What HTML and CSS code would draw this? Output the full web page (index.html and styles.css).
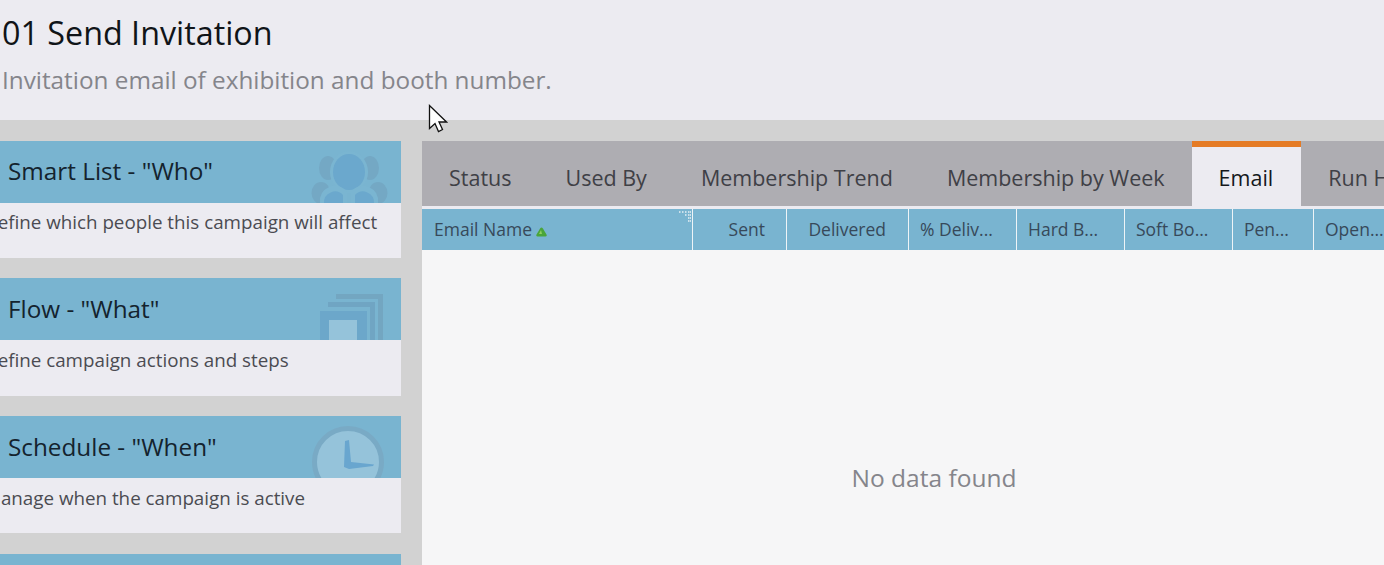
FILE: index.html
```html
<!DOCTYPE html>
<html lang="en">
<head>
<meta charset="utf-8">
<title>01 Send Invitation</title>
<link rel="stylesheet" href="styles.css">
</head>
<body>
<header class="page-head">
  <h1 class="page-title">01 Send Invitation</h1>
  <p class="page-sub">Invitation email of exhibition and booth number.</p>
</header>
<main class="workspace">
  <section class="cards">
    <article class="card">
      <div class="card-head">
        <h2 class="card-title">Smart List - "Who"</h2>
        <svg class="card-icon" width="90" height="62" viewBox="0 0 90 62">
          <g fill="#74a8c4">
            <ellipse cx="28" cy="27" rx="9" ry="12"/><ellipse cx="70" cy="27" rx="9" ry="12"/>
            <ellipse cx="21" cy="52" rx="9.500" ry="11"/><ellipse cx="78" cy="52" rx="9.500" ry="11"/>
          </g>
          <ellipse cx="49" cy="31" rx="19" ry="21" fill="#7ab5d1"/>
          <ellipse cx="49" cy="31" rx="16" ry="18" fill="#6ba8cd"/>
          <path d="M20 62a15 15 0 0 1 27-11v11z M51 62v-11a15 15 0 0 1 27 11z" fill="#7ab5d1"/>
          <path d="M24 62a11 11 0 0 1 19-8v8z M55 62v-8a11 11 0 0 1 19 8z" fill="#6ba8cd"/>
        </svg>
      </div>
      <p class="card-desc">Define which people this campaign will affect</p>
    </article>
    <article class="card card-tall card-low">
      <div class="card-head">
        <h2 class="card-title">Flow - "What"</h2>
        <svg class="card-icon" width="90" height="62" viewBox="0 0 90 62">
          <path d="M36 16h47v46h-5V21H36z" fill="#73a6c1"/>
          <path d="M28 24h47v38h-5V29H28z" fill="#70a5c3"/>
          <rect x="20" y="33" width="47" height="29" fill="#6ca7ca"/>
          <rect x="29" y="42" width="28" height="20" fill="#95c3da"/>
        </svg>
      </div>
      <p class="card-desc">Define campaign actions and steps</p>
    </article>
    <article class="card card-gap card-low">
      <div class="card-head">
        <h2 class="card-title">Schedule - "When"</h2>
        <svg class="card-icon" width="90" height="62" viewBox="0 0 90 62">
          <circle cx="48" cy="46" r="33.500" fill="#95c3da" stroke="#79aac5" stroke-width="5"/>
          <path d="M45 25l4-1 2 22 23 2.500-1 1.500-24 3-5-2z" fill="#69a6cf"/>
        </svg>
      </div>
      <p class="card-desc">Manage when the campaign is active</p>
    </article>
    <article class="card">
      <div class="card-head"></div>
    </article>
  </section>
  <section class="panel">
    <nav class="tabs">
      <span class="tab">Status</span>
      <span class="tab">Used By</span>
      <span class="tab">Membership Trend</span>
      <span class="tab">Membership by Week</span>
      <span class="tab tab-active">Email</span>
      <span class="tab">Run History</span>
    </nav>
    <div class="grid-head">
      <div class="col col-name">Email Name
        <svg class="sort" width="13" height="10" viewBox="0 0 13 10"><path d="M6.500 .5c1 0 1.500 1 2 2l3 5c.6 1 0 2-1 2h-8c-1 0-1.600-1-1-2l3-5c.5-1 1-2 2-2z" fill="#4aa53a"/><path d="M6 3l-2 4h3z" fill="#8fd05f"/></svg>
        <svg class="grip" width="14" height="14" viewBox="0 0 14 14"><path d="M1 2h2M4 2h2M7 2h2M10 2h3M7 5h2M10 5h3M10 8h3M10 11h3" stroke="#e8f0f4" stroke-width="1.500" stroke-dasharray="1.500 .5"/></svg>
      </div>
      <div class="col col-sent">Sent</div>
      <div class="col col-delivered">Delivered</div>
      <div class="col col-108">% Deliv...</div>
      <div class="col col-108">Hard B...</div>
      <div class="col col-108">Soft Bo...</div>
      <div class="col col-81">Pen...</div>
      <div class="col col-open">Open...</div>
    </div>
    <div class="grid-body">No data found</div>
  </section>
</main>
<svg class="cursor" width="20" height="30" viewBox="0 0 20 30"><path d="M1.500 1.500v23l5.500-5 3.500 8 4-2-3.500-7.500h7.500z" fill="#fff" stroke="#111" stroke-width="1.300" stroke-linejoin="miter"/></svg>
</body>
</html>
```
FILE: styles.css
```css
* { box-sizing: border-box; }
html, body { margin: 0; height: 565px; overflow: hidden; }
body { font-family: "Open Sans", sans-serif; background: #d2d2d2; position: relative; }
.page-head { height: 120px; background: #ecebf1; padding: 10px 0 0 2px; }
.page-title { margin: 0; font-size: 32.300px; line-height: 44px; font-weight: 400; color: #101418; }
.page-sub { margin: 6px 0 0; font-size: 24.300px; line-height: 40px; color: #85858b; }
.workspace { display: flex; height: 445px; padding-top: 21px; gap: 21px; overflow: hidden; }
.cards { width: 401px; flex: none; display: flex; flex-direction: column; gap: 20px; }
.card { flex: none; height: 117px; background: #ecebf1; overflow: hidden; }
.card-tall { height: 118px; }
.card-gap { margin-bottom: 1px; }
.card-head { height: 62px; background: #79b4d0; position: relative; overflow: hidden; padding: 0 0 0 8px; }
.card-title { margin: 0; font-size: 24.300px; line-height: 60px; font-weight: 400; color: #14232e; }
.card-icon { position: absolute; right: 11px; top: 0; }
.card-desc { margin: 0 0 0 -16px; font-size: 18.800px; line-height: 38px; color: #4b4b52; white-space: nowrap; }
.card-low .card-title { line-height: 62px; }
.card-low .card-desc { line-height: 40px; }
.panel { flex: 1; min-width: 0; display: flex; flex-direction: column; background: #f6f6f7; overflow: hidden; }
.tabs { display: flex; height: 65px; background: #aeadb2; flex: none; white-space: nowrap; }
.tab { padding: 17px 27px 0; font-size: 21.500px; line-height: 40px; color: #3f4046; flex: none; }
.tab-active { background: #ecebf1; color: #14181c; border-top: 6px solid #e57b25; padding: 11px 28px 0 27px; }
.grid-head { display: flex; flex: none; height: 44px; border-top: 3px solid #ecebf1; background: #79b4d0; color: #37495a; font-size: 17.500px; line-height: 41px; white-space: nowrap; }
.col { flex: none; height: 41px; padding: 0 11px; border-right: 1px solid #eef4f7; position: relative; }
.col-name { width: 271px; padding-left: 12px; }
.col-sent { width: 94px; text-align: right; padding-right: 21px; }
.col-delivered { width: 122px; text-align: right; padding-right: 22px; }
.col-108 { width: 108px; }
.col-81 { width: 81px; }
.col-open { width: 90px; border-right: 0; }
.sort { margin-left: -2px; vertical-align: -1px; }
.grip { position: absolute; right: 0; top: 1px; }
.grid-body { flex: 1; display: flex; justify-content: center; font-size: 24.500px; line-height: 34px; color: #85858b; padding: 211px 0 0 62px; }
.cursor { position: absolute; left: 428px; top: 104px; }
```
